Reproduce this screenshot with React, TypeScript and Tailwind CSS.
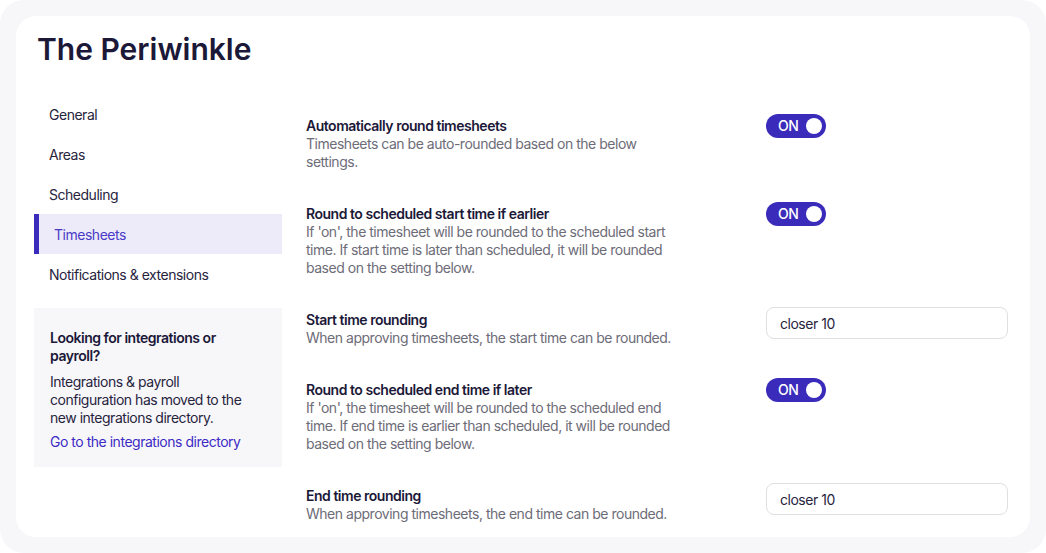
const navItems = ["General", "Areas", "Scheduling", "Timesheets", "Notifications & extensions"];

type Row = {
  title: string;
  desc: string;
  control: "toggle" | "input";
};

const rows: Row[] = [
  {
    title: "Automatically round timesheets",
    desc: "Timesheets can be auto-rounded based on the below settings.",
    control: "toggle",
  },
  {
    title: "Round to scheduled start time if earlier",
    desc: "If 'on', the timesheet will be rounded to the scheduled start time. If start time is later than scheduled, it will be rounded based on the setting below.",
    control: "toggle",
  },
  {
    title: "Start time rounding",
    desc: "When approving timesheets, the start time can be rounded.",
    control: "input",
  },
  {
    title: "Round to scheduled end time if later",
    desc: "If 'on', the timesheet will be rounded to the scheduled end time. If end time is earlier than scheduled, it will be rounded based on the setting below.",
    control: "toggle",
  },
  {
    title: "End time rounding",
    desc: "When approving timesheets, the end time can be rounded.",
    control: "input",
  },
];

function Toggle() {
  return (
    <div className="flex h-6 w-[60px] items-center justify-between rounded-full bg-[#3a2bbb] pl-3 pr-1">
      <span className="text-[14px] font-medium leading-none text-white">ON</span>
      <span className="h-4 w-4 rounded-full bg-white" />
    </div>
  );
}

function SelectBox() {
  return (
    <div className="-mt-px flex h-[32px] w-[242px] items-center rounded-lg border border-[#dfdfe4] bg-white px-[13px] text-[14px] text-[#27243d]">
      closer 10
    </div>
  );
}

export default function App() {
  return (
    <div
      className="h-[553px] w-full bg-white"
      style={{ fontFamily: "Inter, 'Noto Sans', sans-serif" }}
    >
      <div className="h-full w-full rounded-[24px] bg-[#f7f7fa] p-4">
        <div className="h-full w-full overflow-hidden rounded-[20px] bg-white px-[18px] pt-[15px]">
          <h1 className="pl-[3px] text-[30px] font-semibold leading-[36px] text-[#1b1838]">
            The Periwinkle
          </h1>

          <div className="mt-[27px] flex gap-6 tracking-[-0.03em]">
            <aside className="w-[248px] shrink-0">
              <nav className="flex flex-col">
                {navItems.map((item) =>
                  item === "Timesheets" ? (
                    <div
                      key={item}
                      className="flex h-10 items-center border-l-[5px] border-[#3a2bbb] bg-[#edebf9] pl-[15px] text-[14px] text-[#4a3bc6]"
                    >
                      {item}
                    </div>
                  ) : (
                    <div
                      key={item}
                      className="flex h-10 items-center px-[15px] text-[14px] text-[#27243d]"
                    >
                      {item}
                    </div>
                  ),
                )}
              </nav>

              <div className="mt-[14px] bg-[#f7f7fa] px-4 pb-4 pt-[21px] text-[14px] leading-[18px]">
                <p className="font-semibold text-[#1b1838]">
                  Looking for integrations or payroll?
                </p>
                <p className="mt-2 max-w-[200px] text-[#27243d]">
                  Integrations &amp; payroll configuration has moved to the new integrations
                  directory.
                </p>
                <a href="#" className="mt-[6px] block text-[#3d2bc4]">
                  Go to the integrations directory
                </a>
              </div>
            </aside>

            <main className="flex flex-1 flex-col gap-[33px] pt-[22px]">
              {rows.map((row) => (
                <div key={row.title} className="flex items-start">
                  <div className="w-[460px] shrink-0 pr-[88px] text-[14px]">
                    <p className="font-semibold leading-[19px] text-[#1b1838]">{row.title}</p>
                    <p className="leading-[18px] text-[#6d6c78]">{row.desc}</p>
                  </div>
                  <div className="-mt-[2px]">
                    {row.control === "toggle" ? <Toggle /> : <SelectBox />}
                  </div>
                </div>
              ))}
            </main>
          </div>
        </div>
      </div>
    </div>
  );
}
